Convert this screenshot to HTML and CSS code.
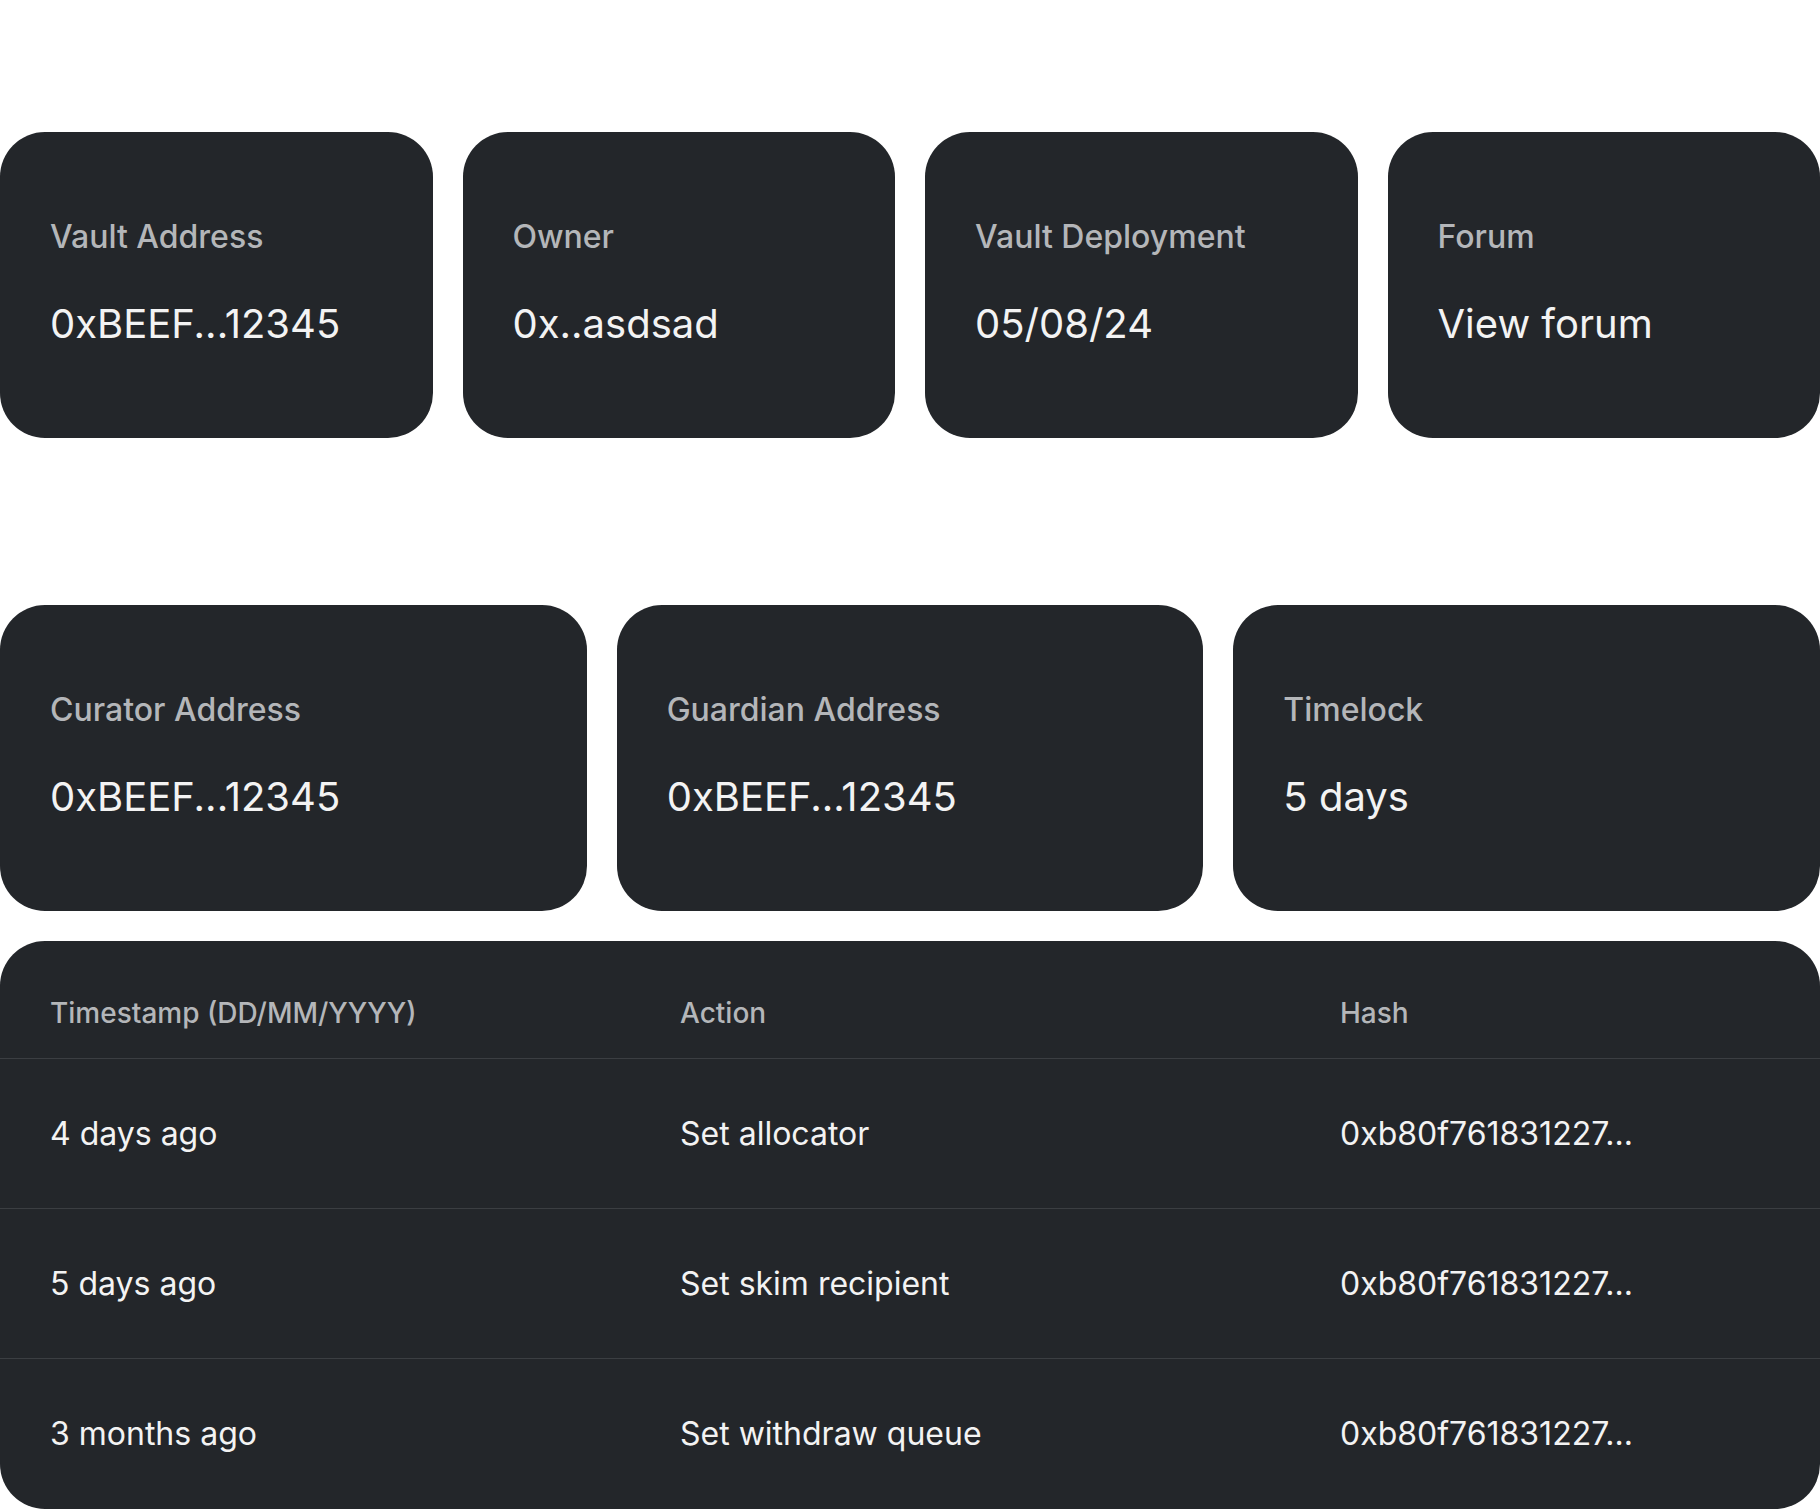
FILE: index.html
```html
<!DOCTYPE html>
<html lang="en">
<head>
  <meta charset="UTF-8">
  <meta name="viewport" content="width=device-width, initial-scale=1.0">
  <title>Vault Info</title>
  <link rel="stylesheet" href="styles.css">
</head>
<body>
  <div class="page">
    <div class="cards cards-four">
      <div class="card">
        <div class="card-label">Vault Address</div>
        <div class="card-value">0xBEEF...12345</div>
      </div>
      <div class="card">
        <div class="card-label">Owner</div>
        <div class="card-value">0x..asdsad</div>
      </div>
      <div class="card">
        <div class="card-label">Vault Deployment</div>
        <div class="card-value">05/08/24</div>
      </div>
      <div class="card">
        <div class="card-label">Forum</div>
        <div class="card-value">View forum</div>
      </div>
    </div>

    <div class="cards cards-three">
      <div class="card">
        <div class="card-label">Curator Address</div>
        <div class="card-value">0xBEEF...12345</div>
      </div>
      <div class="card">
        <div class="card-label">Guardian Address</div>
        <div class="card-value">0xBEEF...12345</div>
      </div>
      <div class="card">
        <div class="card-label">Timelock</div>
        <div class="card-value">5 days</div>
      </div>
    </div>

    <div class="history">
      <div class="history-head">
        <div>Timestamp (DD/MM/YYYY)</div>
        <div>Action</div>
        <div>Hash</div>
      </div>
      <div class="history-row">
        <div>4 days ago</div>
        <div>Set allocator</div>
        <div>0xb80f761831227...</div>
      </div>
      <div class="history-row">
        <div>5 days ago</div>
        <div>Set skim recipient</div>
        <div>0xb80f761831227...</div>
      </div>
      <div class="history-row">
        <div>3 months ago</div>
        <div>Set withdraw queue</div>
        <div>0xb80f761831227...</div>
      </div>
    </div>
  </div>
</body>
</html>
```

FILE: styles.css
```css
body {
  font-family: 'Inter', 'Noto Sans', sans-serif;
  margin: 0;
  padding: 0;
  background-color: #ffffff;
}
.page {
  display: flex;
  flex-direction: column;
  padding-top: 132px;
}
.cards {
  display: grid;
  gap: 30px;
}
.cards-four {
  grid-template-columns: repeat(4, 1fr);
  margin-bottom: 167px;
}
.cards-three {
  grid-template-columns: repeat(3, 1fr);
  margin-bottom: 30px;
}
.card {
  display: flex;
  flex-direction: column;
  gap: 51px;
  height: 306px;
  box-sizing: border-box;
  padding: 89px 50px 0;
  border-radius: 45px;
  background: #23262a;
}
.card-label {
  font-size: 32px;
  font-weight: 500;
  line-height: 1;
  color: #b4b6b9;
}
.card-value {
  font-size: 40px;
  line-height: 1;
  color: #f3f3f3;
}
.history {
  border-radius: 45px;
  background: #23262a;
  height: 568px;
  overflow: hidden;
}
.history-head,
.history-row {
  display: grid;
  grid-template-columns: 630px 660px 1fr;
  padding: 0 50px;
  border-bottom: 1px solid #3b3e42;
}
.history-head {
  height: 118px;
  box-sizing: border-box;
  padding-top: 58px;
  font-size: 28px;
  font-weight: 500;
  line-height: 1;
  color: #b4b6b9;
}
.history-row {
  height: 150px;
  box-sizing: border-box;
  align-items: center;
  font-size: 32px;
  line-height: 1;
  color: #f3f3f3;
}
.history-row:last-child {
  border-bottom: none;
}
```
